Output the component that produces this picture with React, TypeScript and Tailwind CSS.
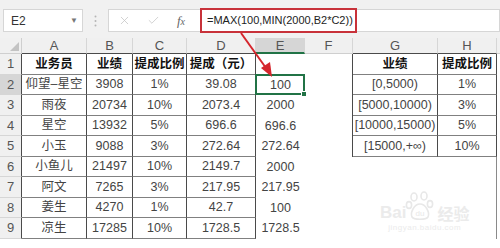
import React from "react";
import { X, Check } from "lucide-react";

const widths = ["w-[22px]", "w-[65px]", "w-[46px]", "w-[54px]", "w-[69px]", "w-[49px]", "w-[48px]", "w-[85px]", "w-[59px]", "w-[3px]"];
const letters = ["A", "B", "C", "D", "E", "F", "G", "H", ""];

const rows: string[][] = [
  ["业务员", "业绩", "提成比例", "提成（元）", "", "", "业绩", "提成比例"],
  ["仰望–星空", "3908", "1%", "39.08", "100", "", "[0,5000)", "1%"],
  ["雨夜", "20734", "10%", "2073.4", "2000", "", "[5000,10000)", "3%"],
  ["星空", "13932", "5%", "696.6", "696.6", "", "[10000,15000)", "5%"],
  ["小玉", "9088", "3%", "272.64", "272.64", "", "[15000,+∞)", "10%"],
  ["小鱼儿", "21497", "10%", "2149.7", "2000", "", "", ""],
  ["阿文", "7265", "3%", "217.95", "217.95", "", "", ""],
  ["姜生", "4270", "1%", "42.7", "100", "", "", ""],
  ["凉生", "17285", "10%", "1728.5", "1728.5", "", "", ""],
];

const boxed = "border-r border-b border-r-[#4a4a4a] border-b-[#808080]";

function cellBorder(r: number, c: number) {
  if (c <= 3) return boxed;
  if (c === 5) return r <= 4 ? "border-r border-r-[#4a4a4a]" : "";
  if (c === 6) return r <= 4 ? boxed : "";
  if (c === 7) return r <= 4 ? boxed : "border-r border-r-[#8a8a8a]";
  return "";
}

function headerBorder(c: number) {
  if (c === 4) return "border-b-2 border-b-[#217346] bg-[#d6d6d6]";
  if (c === 5 || c === 8) return "border-b border-b-[#cfcfcf]";
  return "border-b border-b-[#4a4a4a]";
}

const Watermark = () => (
  <div className="absolute left-[380px] top-[191px] flex flex-col items-center text-[#ebebeb] pointer-events-none">
    <div className="flex items-end">
      <span className="text-[17px] font-bold leading-none">Bai</span>
      <svg width="30" height="30" viewBox="0 0 30 30" className="-mx-[1px]">
        <g fill="none" stroke="#e8e8e8" strokeWidth="1.6">
          <ellipse cx="9" cy="6" rx="3" ry="4" />
          <ellipse cx="19" cy="5" rx="3" ry="4" />
          <ellipse cx="4" cy="14" rx="2.6" ry="3.4" />
          <ellipse cx="25" cy="13" rx="2.6" ry="3.4" />
          <path d="M15 13 C9 13 5 22 7 26 C9 29 21 29 23 26 C25 22 21 13 15 13 Z" />
        </g>
        <text x="15" y="25" textAnchor="middle" fontSize="8" fill="#e8e8e8" fontFamily="Liberation Sans, sans-serif">du</text>
      </svg>
      <span className="ml-[3px] text-[16px] font-bold leading-none [font-family:'Noto_Sans_CJK_SC',sans-serif]">经验</span>
    </div>
    <span className="mt-[3px] text-[8px] leading-none tracking-[0.5px]">jingyan.baidu.com</span>
  </div>
);

export default function App() {
  return (
    <div className="relative w-[500px] h-[248px] overflow-hidden bg-white [font-family:'Liberation_Sans','Noto_Sans_CJK_SC',sans-serif]">
      {/* formula bar */}
      <div className="flex items-start h-[38px] pt-[9px] bg-[#f1f1f1]">
        <div className="ml-[3px] w-[80px] h-[23px] bg-white border border-[#d6d6d6] flex items-center pl-[7px] pr-[4px] text-[12px] text-[#333]">
          <span>E2</span>
          <span className="flex-1" />
          <span className="text-[8px] text-[#777]">▼</span>
        </div>
        <div className="w-[25px] h-[23px] flex items-center justify-center">
          <svg width="3" height="12" viewBox="0 0 3 12">
            <circle cx="1.5" cy="1.5" r="1" fill="#b5b5b5" />
            <circle cx="1.5" cy="6" r="1" fill="#b5b5b5" />
            <circle cx="1.5" cy="10.5" r="1" fill="#b5b5b5" />
          </svg>
        </div>
        <div className="flex-1 h-[23px] bg-white border border-[#d6d6d6] flex items-center">
          <div className="w-[30px] flex justify-center">
            <X size={13} strokeWidth={1.4} color="#c4c4c4" />
          </div>
          <div className="w-[28px] flex justify-center">
            <Check size={13} strokeWidth={1.4} color="#c4c4c4" />
          </div>
          <div className="w-[28px] flex justify-center text-[13px] italic text-[#666] [font-family:'Liberation_Serif',serif]">
            f<span className="text-[10px] mt-[3px]">x</span>
          </div>
          <div className="ml-[5px] w-[157px] h-[25px] -my-px border-2 border-[#c8323a] flex items-center pl-[5px] text-[11px] text-[#222] whitespace-nowrap">
            =MAX(100,MIN(2000,B2*C2))
          </div>
        </div>
      </div>

      {/* column headers */}
      <div className="flex h-[16px] bg-[#f0f0f0] text-[13px] leading-none text-[#555]">
        <div className="relative w-[22px] border-r border-b border-[#cfcfcf]">
          <div className="absolute right-[2px] bottom-[2px] w-0 h-0 border-l-[9px] border-l-transparent border-b-[9px] border-b-[#c3c3c3]" />
        </div>
        {letters.map((l, c) => (
          <div
            key={c}
            className={`${widths[c + 1]} ${c < 8 ? "border-r border-r-[#d6d6d6]" : ""} ${headerBorder(c)} flex items-center justify-center`}
          >
            {l}
          </div>
        ))}
      </div>

      {/* rows */}
      {rows.map((row, r) => (
        <div key={r} className="flex h-[20.5px] text-[12.5px] leading-none">
          <div
            className={`w-[22px] border-r border-b border-r-[#4a4a4a] border-b-[#d6d6d6] flex items-center justify-center text-[13px] text-[#555] ${
              r === 1 ? "bg-[#d6d6d6]" : "bg-[#f0f0f0]"
            }`}
          >
            {r + 1}
          </div>
          {Array.from({ length: 9 }).map((_, c) => (
            <div
              key={c}
              className={`relative ${widths[c + 1]} ${cellBorder(r, c)} flex items-center justify-center whitespace-nowrap ${
                r === 0 ? "font-bold text-[#111]" : "text-[#444]"
              }`}
            >
              {row[c] ?? ""}
              {r === 1 && c === 4 && (
                <div className="absolute -top-px -left-px right-0 bottom-0 border-2 border-[#217346]">
                  <div className="absolute -right-[4px] -bottom-[4px] w-[6px] h-[6px] bg-[#217346] border border-white" />
                </div>
              )}
            </div>
          ))}
        </div>
      ))}

      {/* annotation arrow */}
      <svg className="absolute left-0 top-0 pointer-events-none" width="500" height="248">
        <line x1="241" y1="33" x2="266" y2="68" stroke="#d5262d" strokeWidth="2" />
        <polygon points="272,77 261,68 270,62" fill="#d5262d" />
      </svg>

      <Watermark />
    </div>
  );
}
